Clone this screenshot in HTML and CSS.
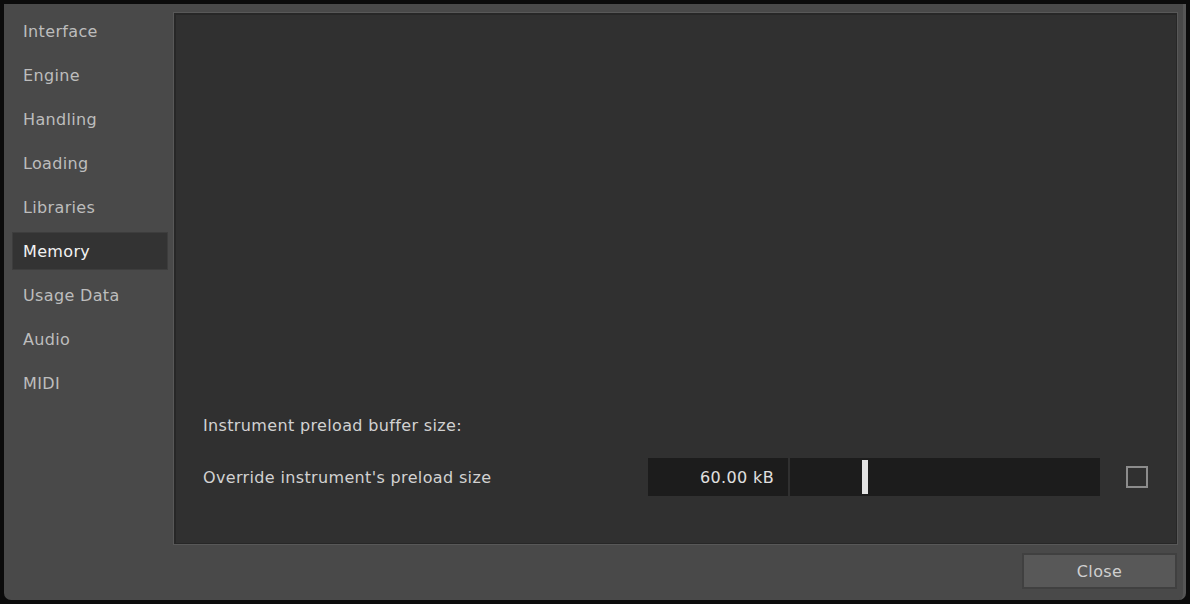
FILE: index.html
```html
<!DOCTYPE html>
<html lang="en">
<head>
    <meta charset="UTF-8">
    <title>Options - Memory</title>
    <link rel="stylesheet" href="styles.css">
</head>
<body>
    <div class="window">
        <nav class="sidebar">
            <div class="nav-item">Interface</div>
            <div class="nav-item">Engine</div>
            <div class="nav-item">Handling</div>
            <div class="nav-item">Loading</div>
            <div class="nav-item">Libraries</div>
            <div class="nav-item active">Memory</div>
            <div class="nav-item">Usage Data</div>
            <div class="nav-item">Audio</div>
            <div class="nav-item">MIDI</div>
        </nav>

        <main class="panel">
            <div class="section-title">Instrument preload buffer size:</div>
            <div class="setting-row">
                <span class="setting-label">Override instrument's preload size</span>
                <div class="value-box">60.00 kB</div>
                <div class="slider">
                    <span class="slider-knob"></span>
                </div>
                <span class="checkbox"></span>
            </div>
        </main>

        <div class="footer">
            <button class="btn">Close</button>
        </div>
    </div>
</body>
</html>
```

FILE: styles.css
```css
* {
    box-sizing: border-box;
}

body {
    margin: 0;
    padding: 4px;
    background: #0b0b0b;
    font-family: "DejaVu Sans", "Liberation Sans", sans-serif;
    font-size: 16px;
    letter-spacing: 0.35px;
}

.window {
    width: 1182px;
    height: 596px;
    display: grid;
    grid-template-columns: 169px 1fr;
    grid-template-rows: 1fr auto;
    row-gap: 8px;
    padding: 8px 5px 11px 0;
    background: #494949;
    border-right: 3px solid #565656;
    border-radius: 0 0 7px 7px;
}

.sidebar {
    display: flex;
    flex-direction: column;
    gap: 6px;
    padding: 0 5px 0 8px;
}

.nav-item {
    height: 38px;
    display: flex;
    align-items: center;
    padding-left: 10px;
    color: #bdbdbd;
    border: 1px solid transparent;
}

.nav-item.active {
    background: #333333;
    border-color: #3d3d3d;
    color: #f2f2f2;
}

.panel {
    display: flex;
    flex-direction: column;
    justify-content: flex-end;
    padding: 0 29px 48px 29px;
    background: #303030;
    border: 1px solid #585858;
    box-shadow: inset 2px 2px 0 #272727, inset -1px -1px 0 #272727;
}

.section-title {
    color: #d2d2d2;
    line-height: 20px;
    margin-bottom: 22px;
}

.setting-row {
    display: flex;
    align-items: center;
}

.setting-label {
    flex: 1;
    color: #d2d2d2;
}

.value-box {
    width: 140px;
    height: 38px;
    display: flex;
    align-items: center;
    justify-content: flex-end;
    padding-right: 14px;
    background: #1c1c1c;
    color: #e0e0e0;
}

.slider {
    width: 310px;
    height: 38px;
    margin-left: 2px;
    position: relative;
    background: #1c1c1c;
}

.slider-knob {
    position: absolute;
    left: 72px;
    top: 2px;
    bottom: 2px;
    width: 6px;
    background: #e2e2e2;
}

.checkbox {
    width: 22px;
    height: 22px;
    margin-left: 26px;
    border: 2px solid #8c8c8c;
}

.footer {
    grid-column: 2;
    display: flex;
    justify-content: flex-end;
}

.btn {
    width: 155px;
    height: 36px;
    margin-right: 1px;
    background: #585858;
    border: 2px solid #404040;
    color: #cfcfcf;
    font-family: inherit;
    font-size: 16px;
    letter-spacing: 0.35px;
}
```
